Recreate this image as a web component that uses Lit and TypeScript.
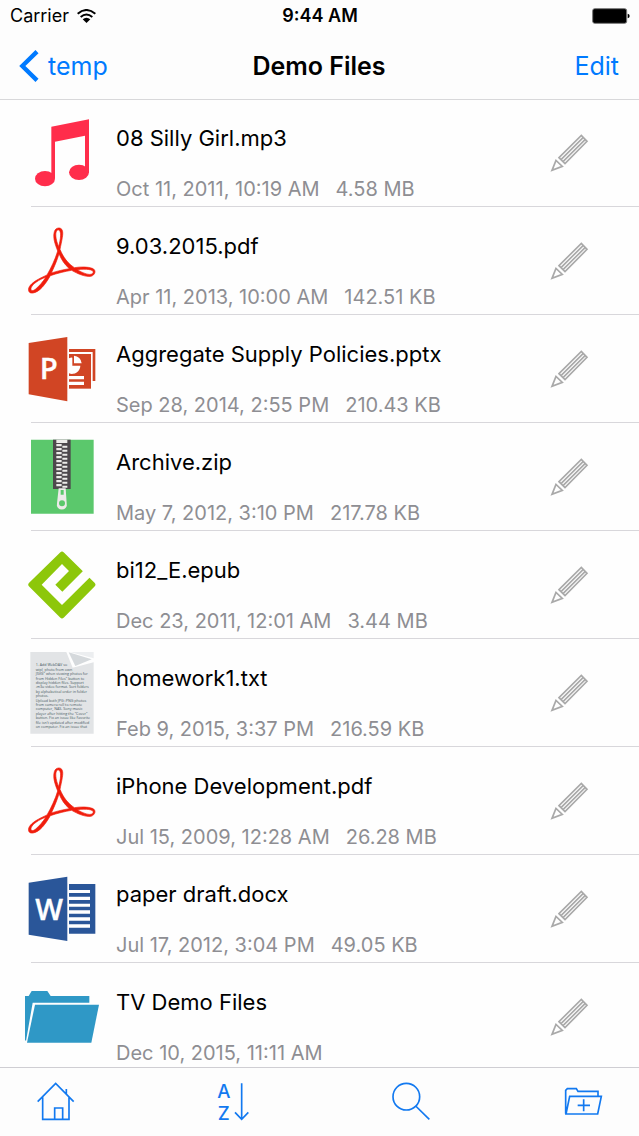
import { LitElement, html, svg, css } from "lit";
import { customElement, property } from "lit/decorators.js";

type Kind = "music" | "pdf" | "pptx" | "zip" | "epub" | "txt" | "docx" | "folder";

interface FileEntry {
  name: string;
  date: string;
  size?: string;
  kind: Kind;
}

const FILES: FileEntry[] = [
  { name: "08 Silly Girl.mp3", date: "Oct 11, 2011, 10:19 AM", size: "4.58 MB", kind: "music" },
  { name: "9.03.2015.pdf", date: "Apr 11, 2013, 10:00 AM", size: "142.51 KB", kind: "pdf" },
  { name: "Aggregate Supply Policies.pptx", date: "Sep 28, 2014, 2:55 PM", size: "210.43 KB", kind: "pptx" },
  { name: "Archive.zip", date: "May 7, 2012, 3:10 PM", size: "217.78 KB", kind: "zip" },
  { name: "bi12_E.epub", date: "Dec 23, 2011, 12:01 AM", size: "3.44 MB", kind: "epub" },
  { name: "homework1.txt", date: "Feb 9, 2015, 3:37 PM", size: "216.59 KB", kind: "txt" },
  { name: "iPhone Development.pdf", date: "Jul 15, 2009, 12:28 AM", size: "26.28 MB", kind: "pdf" },
  { name: "paper draft.docx", date: "Jul 17, 2012, 3:04 PM", size: "49.05 KB", kind: "docx" },
  { name: "TV Demo Files", date: "Dec 10, 2015, 11:11 AM", kind: "folder" },
];

const NOTE_LINES = [
  "1. Add WebDAV so",
  "wipl, photo from own",
  "JSVG\" when viewing photos for",
  "from Hidden Files\" button to",
  "display hidden files. Support",
  ".m3u video format. Sort folders",
  "by alphabetical order in folder",
  "photos.",
  "Upload both JPG+PNG photos",
  "from camera roll to remote",
  "computer, NAS. Sony music",
  "player after hitting the \"Cover\"",
  "button. Fix an issue like Favorite",
  "file isn't updated after modified",
  "on computer. Fix an issue that",
];

const TEETH = Array.from({ length: 11 }, (_, i) => 36 + i * 12);

// Every drawing shares a 270 x 321 canvas; the group shifts it down to its place in the row.
const ART: Record<Kind, unknown> = {
  music: svg`<g transform="translate(0 33)" fill="#ff2d4b">
    <path d="M94 50 L207 28 V186 H195 V77 L105 95 V205 H94Z"/>
    <ellipse cx="75" cy="206" rx="30" ry="23"/>
    <ellipse cx="177" cy="187" rx="30" ry="23"/>
  </g>`,
  pdf: svg`<g transform="translate(0 33)" fill="#f01d0c" stroke="#f01d0c" stroke-width="2" fill-rule="evenodd">
    <path d="M115 30 C128 29 130 41 127 58 C125 72 122 83 120 94 C130 119 144 136 163 149 C183 146 203 146 217 151 C230 156 226 171 213 175 C195 177 174 168 155 157 C135 160 112 166 91 173 C76 199 59 222 39 225 C27 227 22 217 28 206 C36 193 56 182 81 171 C94 148 106 123 113 99 C105 78 98 60 103 41 C105 34 109 31 115 30Z
    M114 35 C103 39 107 66 116 86 C121 65 127 38 114 35Z
    M117 107 C112 125 104 144 94 165 C112 159 130 155 148 152 C134 140 124 125 117 107Z
    M172 155 C190 166 209 173 217 167 C227 157 209 151 172 155Z
    M78 177 C56 186 39 197 34 208 C30 218 37 221 46 214 C57 205 68 192 78 177Z"/>
  </g>`,
  pptx: svg`<g transform="translate(0 33)" fill="#d14524">
    <path d="M26 51 L142 33 V226 L26 205Z"/>
    <path d="M147 69 H226 V165 H218 V78 H147Z"/>
    <path d="M147 84 H213 V188 H147Z"/>
    <path fill="#fff" d="M147 97 Q153 94 157 95 V119 H181 A25 25 0 0 1 147 142Z M162 89 A25 25 0 0 1 185 112 H162Z M147 150 H192 V160 H147Z M147 167 H192 V177 H147Z"/>
    <text class="letter" x="59" y="160" font-size="88">P</text>
  </g>`,
  zip: svg`<g transform="translate(0 27)">
    <path fill="#5bc86c" d="M33 23 H221 V245 H33Z"/>
    <path fill="#4d484c" d="M99 23 H152 V171 H99Z"/>
    <path fill="#ecebe9" d="M109 23 H142 V33 H109Z"/>
    ${TEETH.map((y) => svg`<path fill="#ecebe9" d="M109 ${y} H125 V${y + 7} H109Z M127 ${y + 5} H142 V${y + 11} H127Z"/>`)}
    <path fill="#ecebe9" fill-rule="evenodd" d="M116 169 H137 L140 214 A15 15 0 1 1 111 214Z M122 174 V188 H131 V174Z M126 205 A9 9 0 1 0 126 223 A9 9 0 1 0 126 205Z"/>
  </g>`,
  epub: svg`<g transform="translate(0 27)">
    <path fill="#8dc70a" stroke="#8dc70a" stroke-width="16" stroke-linejoin="round" d="M126 43 L33 134 L126 227 L218 134 L126 43Z"/>
    <path fill="#fefefe" d="M189 93 L127 155 L106 134 L147 93 L126 72 L65 134 L126 195 L250 72 L235 50Z"/>
  </g>`,
  txt: svg`<g transform="translate(0 18)">
    <path fill="#e2e4e6" d="M31 21 H139 L158 68 L221 52 V266 H31Z"/>
    <path fill="#d5d9dc" d="M146 22 L166 63 L215 43Z"/>
    <path fill="#eceef0" d="M150 21 H221 V40Z"/>
    ${NOTE_LINES.map((line, i) => svg`<text class="note" x="47" y=${64 + i * 13.2}>${line}</text>`)}
  </g>`,
  docx: svg`<g transform="translate(0 45)" fill="#2a5699">
    <path d="M26 38 L142 20 V213 L26 194Z"/>
    <path d="M147 42 H226 V191 H147Z"/>
    <path fill="#fff" d="M147 60 H210 V69 H147Z M147 80 H210 V90 H147Z M147 101 H210 V110 H147Z M147 121 H210 V131 H147Z M147 142 H210 V152 H147Z M147 163 H210 V173 H147Z"/>
    <text class="letter" x="46" y="149" font-size="88">W</text>
  </g>`,
  folder: svg`<g transform="translate(0 -279)" fill="#2f98c6">
    <path d="M15 378 H26 L35 363 H82 L92 378 H208 V398 H38 L18 513 L15 510Z"/>
    <path d="M45 404 H237 L214 518 H21Z"/>
  </g>`,
};

@customElement("file-row")
class FileRow extends LitElement {
  @property({ attribute: false }) file!: FileEntry;

  static styles = css`
    :host {
      display: block;
    }
    .row {
      display: grid;
      grid-template-columns: 96px minmax(0, 1fr) auto;
      align-items: start;
      height: 108px;
      padding: 0 39px 0 20px;
      box-sizing: border-box;
      background: linear-gradient(#d8d7db, #d8d7db) 31px 100% / 100% 1px no-repeat;
    }
    .art {
      display: block;
      width: 90px;
      height: 107px;
    }
    .letter {
      font-family: "Open Sans", sans-serif;
      font-weight: 600;
      fill: #fff;
      stroke: #fff;
      stroke-width: 1;
    }
    .note {
      font: 500 11px "Open Sans", sans-serif;
      fill: #45585e;
    }
    .link {
      display: grid;
      row-gap: 24px;
      padding-top: 25px;
      color: #000;
      text-decoration: none;
      white-space: nowrap;
    }
    .name {
      font-size: 22px;
      line-height: 28px;
    }
    .meta {
      display: flex;
      gap: 16px;
      font-size: 20px;
      line-height: 26px;
      color: #8e8e93;
    }
    .edit {
      display: block;
      width: 60px;
      height: 60px;
      margin-top: 21px;
      padding: 0;
      border: 0;
      background: none;
    }
    .pencil {
      display: block;
      fill: none;
      stroke: #a9a9a9;
      stroke-width: 5;
    }
  `;

  render() {
    const f = this.file;
    return html`
      <div class="row">
        <svg class="art" viewBox="0 0 270 321" aria-hidden="true">${ART[f.kind]}</svg>
        <a class="link" href="#">
          <span class="name">${f.name}</span>
          <span class="meta"><span>${f.date}</span>${f.size ? html`<span>${f.size}</span>` : ""}</span>
        </a>
        <button class="edit" aria-label="Rename ${f.name}">
          <svg class="pencil" width="60" height="60" viewBox="0 0 180 180" aria-hidden="true">
            <path d="M57 113 L124 46 L141 64 L75 131Z M63 119 L130 52 M69 125 L136 58" />
            <path d="M48 121 L36 151 L67 139Z" />
          </svg>
        </button>
      </div>
    `;
  }
}

@customElement("app-root")
class AppRoot extends LitElement {
  static styles = css`
    :host {
      display: flex;
      flex-direction: column;
      height: 100vh;
      overflow: hidden;
      background: #fefefe;
      color: #000;
      font-family: Inter, "Liberation Sans", sans-serif;
    }
    .top {
      z-index: 1;
      background: #fdfdfd;
      box-shadow: 0 1px 0 #d8d8da;
    }
    .status,
    .nav {
      display: grid;
      grid-template-columns: 1fr auto 1fr;
      align-items: center;
    }
    .status {
      height: 32px;
      padding: 0 9px 0 10px;
      font-size: 18px;
      line-height: 22px;
    }
    .carrier {
      display: flex;
      align-items: center;
      gap: 8px;
    }
    .time {
      font-weight: 600;
    }
    .end {
      justify-self: end;
    }
    .nav {
      height: 67px;
      padding: 0 20px 0 19px;
      font-size: 25px;
      line-height: 30px;
    }
    .title {
      margin: 0;
      font-size: 25px;
      font-weight: 600;
    }
    button {
      padding: 0;
      border: 0;
      background: none;
      font: inherit;
      color: #007aff;
    }
    .back {
      display: flex;
      align-items: center;
      gap: 9px;
      justify-self: start;
    }
    svg {
      display: block;
    }
    .files {
      flex: 1;
      min-height: 0;
      overflow: hidden;
      margin: 0;
      padding: 0;
      list-style: none;
    }
    .tools {
      display: flex;
      justify-content: space-between;
      padding: 0 26px;
      border-top: 1px solid #cfced3;
      background: #fdfdfd;
    }
    .glyph {
      fill: none;
      stroke: #1279f0;
      stroke-width: 5;
    }
    .az {
      font-family: Inter, sans-serif;
      font-size: 56px;
      font-weight: 500;
      fill: #1279f0;
      stroke: none;
    }
  `;

  render() {
    return html`
      <header class="top">
        <div class="status">
          <span class="carrier">
            Carrier
            <svg width="19" height="14" viewBox="0 0 57 42" aria-label="Wi-Fi" fill="none" stroke="#000" stroke-width="6">
              <path d="M2 14 Q28 -8 55 14" />
              <path d="M11 24 Q28 9 46 24" />
              <path fill="#000" stroke="none" d="M17 31 Q28 21 40 31 L28.500 42Z" />
            </svg>
          </span>
          <span class="time">9:44 AM</span>
          <svg class="end" width="38" height="16" viewBox="0 0 114 48" aria-label="Battery full">
            <rect x="2" y="2" width="102" height="44" rx="6" fill="#000" stroke="#777" stroke-width="3" />
            <path d="M107 17 Q113 18 113 24 Q113 30 107 31Z" />
          </svg>
        </div>
        <div class="nav">
          <button class="back">
            <svg width="20" height="32" viewBox="0 0 60 96" fill="none" stroke="#007aff" stroke-width="13" aria-hidden="true">
              <path d="M54 5 L10 48 L54 91" />
            </svg>
            temp
          </button>
          <h1 class="title">Demo Files</h1>
          <button class="end">Edit</button>
        </div>
      </header>
      <ul class="files">
        ${FILES.map((f) => html`<li><file-row .file=${f}></file-row></li>`)}
      </ul>
      <nav class="tools" aria-label="Tools">
        <button aria-label="Home">
          <svg class="glyph" width="60" height="68" viewBox="78 24 180 204" aria-hidden="true">
            <path d="M113 125 L167 70 L221 125 M128 112 V178 H207 V112 M199 101 V87 M164 178 V144 H188 V178" />
          </svg>
        </button>
        <button aria-label="Sort">
          <svg class="glyph" width="60" height="68" viewBox="606 24 180 204" aria-hidden="true">
            <text class="az" x="652" y="113">A</text>
            <text class="az" x="653" y="180">Z</text>
            <path d="M725 70 V177 M705 157 L725 178 L745 157" />
          </svg>
        </button>
        <button aria-label="Search">
          <svg class="glyph" width="60" height="68" viewBox="174 24 180 204" aria-hidden="true">
            <circle cx="262" cy="110" r="40" />
            <path d="M290 138 L331 178" />
          </svg>
        </button>
        <button aria-label="New folder">
          <svg class="glyph" width="60" height="68" viewBox="699 24 180 204" aria-hidden="true">
            <path d="M737 161 V91 L742 86 H769 L774 94 H834 V108 M749 109 H844 L833 162 H738Z M791 118 V154 M773 136 H810" />
          </svg>
        </button>
      </nav>
    `;
  }
}
